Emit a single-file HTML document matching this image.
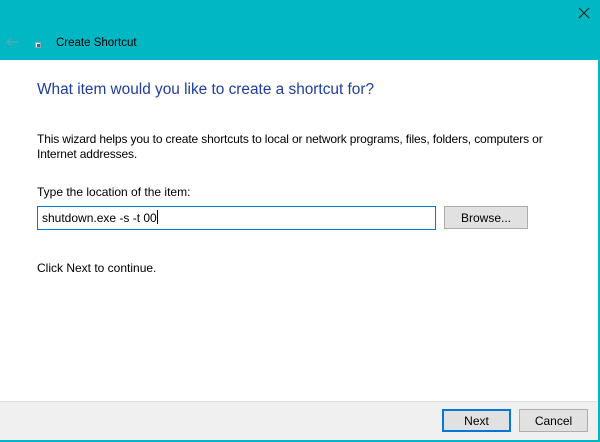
<!DOCTYPE html>
<html><head><style>
*{margin:0;padding:0;box-sizing:border-box}
body{width:600px;height:442px;position:relative;overflow:hidden;background:#fff;font-family:"Liberation Sans",sans-serif;font-size:12px;color:#000}
.hdr{position:absolute;left:0;top:0;width:600px;height:60px;background:#00b7c3}
.t{position:absolute;white-space:nowrap}
.btn{position:absolute;background:#e1e1e1;border:1px solid #adadad;text-align:center;line-height:22px;font-size:12px}
</style></head><body>
<div class="hdr"></div>
<div style="position:absolute;left:0;top:60px;width:600px;height:1px;background:#fff"></div>
<div style="position:absolute;right:0;top:0;width:2px;height:442px;background:#00b7c3"></div>
<div style="position:absolute;left:0;bottom:0;width:600px;height:2px;background:#00b7c3"></div>
<svg style="position:absolute;left:6px;top:37px" width="14" height="10"><path d="M1 5H13M1 5L5 1M1 5L5 9" stroke="#5aa8b0" stroke-width="1.2" fill="none"/></svg>
<div style="position:absolute;left:35px;top:42px;width:6px;height:6px;background:#fff;border:1px solid #8aa"></div>
<div style="position:absolute;left:37px;top:44px;width:3px;height:3px;background:#2a6ad0"></div>
<div class="t" style="left:56px;top:37px;font-size:11.5px;color:#000">Create Shortcut</div>
<svg style="position:absolute;left:578px;top:7px" width="12" height="12"><path d="M1 1L11 11M11 1L1 11" stroke="#222" stroke-width="1.1"/></svg>
<div class="t" style="left:37px;top:81px;font-size:15.4px;color:#1e3d9e">What item would you like to create a shortcut for?</div>
<div class="t" style="left:37px;top:132px;letter-spacing:-0.14px">This wizard helps you to create shortcuts to local or network programs, files, folders, computers or</div>
<div class="t" style="left:37px;top:147px;letter-spacing:-0.14px">Internet addresses.</div>
<div class="t" style="left:37px;top:185px">Type the location of the item:</div>
<div style="position:absolute;left:37px;top:206px;width:399px;height:24px;border:1px solid #0078d7;background:#fff"></div>
<div class="t" style="left:42px;top:210px">shutdown.exe -s -t 00<span style="display:inline-block;width:1px;height:14px;background:#000;vertical-align:-2px"></span></div>
<div class="btn" style="left:444px;top:206px;width:84px;height:23px">Browse...</div>
<div class="t" style="left:37px;top:261px">Click Next to continue.</div>
<div style="position:absolute;left:0;top:401px;width:598px;height:39px;background:#f0f0f0;border-top:1px solid #dfdfdf"></div>
<div class="btn" style="left:442px;top:409px;width:69px;height:23px;border:2px solid #0078d7;line-height:20px">Next</div>
<div class="btn" style="left:519px;top:409px;width:69px;height:23px">Cancel</div>
</body></html>
